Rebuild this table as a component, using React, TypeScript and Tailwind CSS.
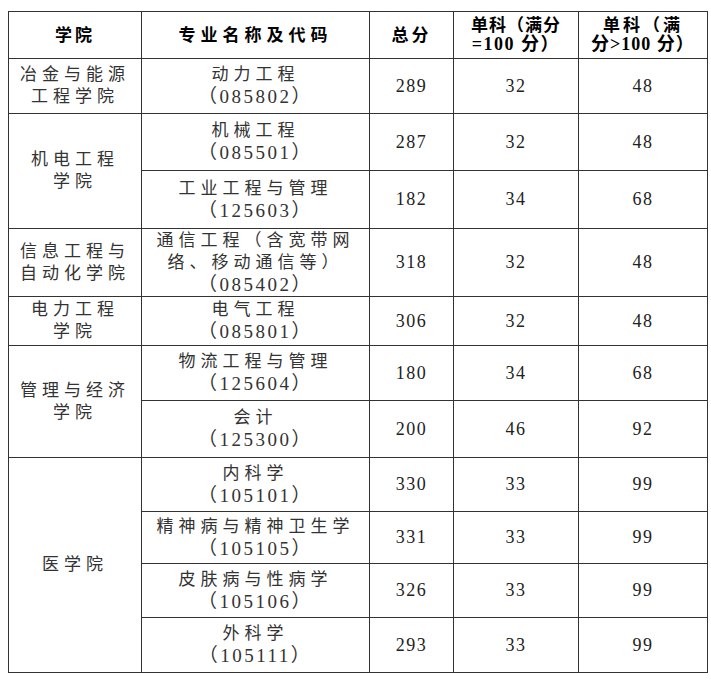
// 专业复试分数线表格

interface Major {
  name: string[];
  code: string;
  total: number;
  single100: number;
  singleOver: number;
  h: string;
}

interface College {
  name: string[];
  majors: Major[];
}

const colleges: College[] = [
  {
    name: ['冶金与能源', '工程学院'],
    majors: [{ name: ['动力工程'], code: '085802', total: 289, single100: 32, singleOver: 48, h: 'h-[55px]' }],
  },
  {
    name: ['机电工程', '学院'],
    majors: [
      { name: ['机械工程'], code: '085501', total: 287, single100: 32, singleOver: 48, h: 'h-[57px]' },
      { name: ['工业工程与管理'], code: '125603', total: 182, single100: 34, singleOver: 68, h: 'h-[58px]' },
    ],
  },
  {
    name: ['信息工程与', '自动化学院'],
    majors: [
      {
        name: ['通信工程（含宽带网', '络、移动通信等）'],
        code: '085402',
        total: 318,
        single100: 32,
        singleOver: 48,
        h: 'h-[68px]',
      },
    ],
  },
  {
    name: ['电力工程', '学院'],
    majors: [{ name: ['电气工程'], code: '085801', total: 306, single100: 32, singleOver: 48, h: 'h-[49px]' }],
  },
  {
    name: ['管理与经济', '学院'],
    majors: [
      { name: ['物流工程与管理'], code: '125604', total: 180, single100: 34, singleOver: 68, h: 'h-[55px]' },
      { name: ['会计'], code: '125300', total: 200, single100: 46, singleOver: 92, h: 'h-[57px]' },
    ],
  },
  {
    name: ['医学院'],
    majors: [
      { name: ['内科学'], code: '105101', total: 330, single100: 33, singleOver: 99, h: 'h-[54px]' },
      { name: ['精神病与精神卫生学'], code: '105105', total: 331, single100: 33, singleOver: 99, h: 'h-[52px]' },
      { name: ['皮肤病与性病学'], code: '105106', total: 326, single100: 33, singleOver: 99, h: 'h-[54px]' },
      { name: ['外科学'], code: '105111', total: 293, single100: 33, singleOver: 99, h: 'h-[55px]' },
    ],
  },
];

const cell = 'border border-[#333] text-center align-middle p-0';
const cjk = 'text-[17px] leading-[22px] tracking-[5px] text-[#333]';
const num = 'text-[18px] tracking-[1.5px] text-[#222]';

export default function App() {
  return (
    <div
      className="bg-white w-[711px] h-[682px] pt-[11px] pl-[8px]"
      style={{ fontFamily: '"Liberation Serif", "Noto Sans CJK SC", serif' }}
    >
      <table className="border-collapse table-fixed w-[699px]">
        <colgroup>
          <col className="w-[133px]" />
          <col className="w-[228px]" />
          <col className="w-[84px]" />
          <col className="w-[125px]" />
          <col className="w-[129px]" />
        </colgroup>
        <thead>
          <tr className="h-[47px]">
            <th className={`${cell} text-[17px] leading-[19px] tracking-[3px] font-bold text-black`}>学院</th>
            <th className={`${cell} text-[17px] leading-[19px] tracking-[5px] font-bold text-black`}>专业名称及代码</th>
            <th className={`${cell} text-[17px] leading-[19px] tracking-[3px] font-bold text-black`}>总分</th>
            <th className={`${cell} text-[17px] leading-[19px] font-bold text-black`}>
              <div className="tracking-[1px]">单科（满分</div>
              <div className="text-[18px] tracking-[1.5px]">=100 分）</div>
            </th>
            <th className={`${cell} text-[17px] leading-[19px] font-bold text-black`}>
              <div className="tracking-[3px]">单科（满</div>
              <div className="text-[18px] tracking-[1px]">分&gt;100 分）</div>
            </th>
          </tr>
        </thead>
        <tbody>
          {colleges.map((c) =>
            c.majors.map((m, i) => (
              <tr key={m.code} className={m.h}>
                {i === 0 && (
                  <td rowSpan={c.majors.length} className={`${cell} ${cjk}`}>
                    {c.name.map((l) => (
                      <div key={l}>{l}</div>
                    ))}
                  </td>
                )}
                <td className={`${cell} ${cjk}`}>
                  {m.name.map((l) => (
                    <div key={l}>{l}</div>
                  ))}
                  <div className="text-[19px] tracking-[2.5px]">（{m.code}）</div>
                </td>
                <td className={`${cell} ${num}`}>{m.total}</td>
                <td className={`${cell} ${num}`}>{m.single100}</td>
                <td className={`${cell} ${num}`}>{m.singleOver}</td>
              </tr>
            ))
          )}
        </tbody>
      </table>
    </div>
  );
}
